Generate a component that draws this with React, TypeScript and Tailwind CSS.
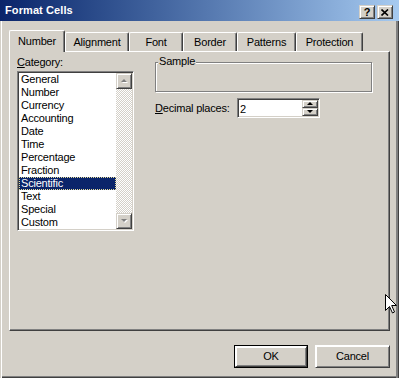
import type { ReactNode } from "react"

const categories = [
  "General",
  "Number",
  "Currency",
  "Accounting",
  "Date",
  "Time",
  "Percentage",
  "Fraction",
  "Scientific",
  "Text",
  "Special",
  "Custom",
]

const tabs = [
  { label: "Number", width: "w-[56px]" },
  { label: "Alignment", width: "w-[64px]" },
  { label: "Font", width: "w-[54px]" },
  { label: "Border", width: "w-[54px]" },
  { label: "Patterns", width: "w-[59px]" },
  { label: "Protection", width: "w-[67px]" },
]

function Raised({ className, children }: { className?: string; children?: ReactNode }) {
  return (
    <div
      className={`flex items-center justify-center border-r border-b border-[#404040] border-t border-l border-t-[#d4d0c8] border-l-[#d4d0c8] bg-[#d4d0c8] shadow-[inset_1px_1px_#fff,inset_-1px_-1px_#808080] ${className ?? ""}`}
    >
      {children}
    </div>
  )
}

function Arrow({ up, color = "#000", shadow = false }: { up: boolean; color?: string; shadow?: boolean }) {
  const d = up ? "M1 4 L4 1 L7 4 Z" : "M1 1 L4 4 L7 1 Z"
  return (
    <svg width="9" height="6" viewBox="0 0 9 6">
      {shadow ? <path d={d} fill="#fff" transform="translate(1 1)" /> : null}
      <path d={d} fill={color} />
    </svg>
  )
}

export default function App() {
  return (
    <div className="relative flex h-[378px] w-[399px] flex-col overflow-hidden bg-[#d4d0c8] font-['Liberation_Sans',Arial,sans-serif] text-[11px] tracking-[-0.2px] text-black select-none">
      {/* title bar */}
      <div className="flex h-[21px] shrink-0 items-start bg-linear-to-r from-[#0a246a] to-[#a6caf0] pl-[5px] pr-[6px]">
        <span className="mt-[4px] text-[11px] leading-[13px] font-bold tracking-[0.1px] text-white">Format Cells</span>
        <div className="ml-auto mt-[5px] flex gap-[2px]">
          <Raised className="h-[14px] w-[16px]">
            <span className="text-[11px] leading-none font-bold">?</span>
          </Raised>
          <Raised className="h-[14px] w-[16px]">
            <svg width="8" height="7" viewBox="0 0 8 7">
              <path d="M0.5 0.5 L7 6.5 M7 0.5 L0.5 6.5" stroke="#000" strokeWidth="1.6" />
            </svg>
          </Raised>
        </div>
      </div>

      {/* body */}
      <div className="flex flex-1 flex-col shadow-[inset_1px_0_#d4d0c8,inset_2px_0_#fff,inset_-1px_0_#404040,inset_-3px_0_#808080,inset_0_-1px_#404040,inset_0_-2px_#808080]">
        {/* tabs */}
        <div className="flex items-end pt-[9px] pl-[9px]">
          {tabs.map((t, i) =>
            i === 0 ? (
              <div
                key={t.label}
                className={`relative z-10 -mb-px flex h-[22px] ${t.width} items-start justify-center rounded-t-[2px] border-t border-l border-white bg-[#d4d0c8] pt-[4px] leading-[13px] shadow-[inset_-1px_0_#808080] border-r border-r-[#404040]`}
              >
                {t.label}
              </div>
            ) : (
              <div
                key={t.label}
                className={`flex h-[19px] ${t.width} items-start justify-center rounded-t-[2px] border-t border-l border-white border-r border-r-[#404040] pt-[3px] leading-[13px] shadow-[inset_-1px_0_#808080]`}
              >
                {t.label}
              </div>
            ),
          )}
        </div>

        {/* panel */}
        <div className="ml-[9px] flex h-[280px] w-[381px] border-t border-l border-white border-r border-b border-r-[#404040] border-b-[#404040] shadow-[inset_-1px_-1px_#808080] pt-[4px] pl-[7px]">
          {/* left column */}
          <div className="flex w-[117px] flex-col">
            <div className="h-[13px] leading-[13px]">
              <span className="underline">C</span>ategory:
            </div>
            <div className="mt-[2px] flex h-[160px] border-t border-l border-[#808080] border-r border-b border-r-white border-b-white bg-white shadow-[inset_1px_1px_#404040,inset_-1px_-1px_#d4d0c8] p-px">
              <div className="flex flex-1 flex-col overflow-hidden">
                {categories.map((c) =>
                  c === "Scientific" ? (
                    <div
                      key={c}
                      className="h-[13px] shrink-0 bg-[#0a246a] pl-[2px] leading-[13px] text-white outline-1 -outline-offset-1 outline-dotted outline-[#e6dd9a]"
                    >
                      {c}
                    </div>
                  ) : (
                    <div key={c} className="h-[13px] shrink-0 pl-[2px] leading-[13px]">
                      {c}
                    </div>
                  ),
                )}
              </div>
              <div className="flex w-[16px] flex-col bg-[repeating-conic-gradient(#fff_0%_25%,#d4d0c8_0%_50%)] bg-size-[2px_2px]">
                <Raised className="h-[16px] w-[16px]">
                  <Arrow up color="#808080" shadow />
                </Raised>
                <div className="flex-1" />
                <Raised className="h-[16px] w-[16px]">
                  <Arrow up={false} color="#808080" shadow />
                </Raised>
              </div>
            </div>
          </div>

          {/* right column */}
          <div className="ml-[21px] flex flex-col pt-[6px]">
            <div className="relative h-[30px] w-[217px] border border-[#808080] shadow-[inset_1px_1px_#fff,1px_1px_#fff]">
              <span className="absolute -top-[8px] left-[2px] bg-[#d4d0c8] px-px leading-[13px]">Sample</span>
            </div>
            <div className="mt-[6px] flex items-center">
              <div className="w-[82px] leading-[13px]">
                <span className="underline">D</span>ecimal places:
              </div>
              <div className="flex h-[20px] w-[83px] border-t border-l border-[#808080] border-r border-b border-r-white border-b-white bg-white shadow-[inset_1px_1px_#404040,inset_-1px_-1px_#d4d0c8] p-px">
                <div className="flex-1 pl-[1px] pt-[3px] leading-[13px]">2</div>
                <div className="flex w-[16px] flex-col">
                  <Raised className="h-[8px] w-[16px]">
                    <Arrow up />
                  </Raised>
                  <Raised className="h-[8px] w-[16px]">
                    <Arrow up={false} />
                  </Raised>
                </div>
              </div>
            </div>
          </div>
        </div>

        {/* buttons */}
        <div className="mt-[14px] flex justify-end gap-[7px] pr-[9px]">
          <div className="flex h-[23px] w-[74px] border border-black">
            <Raised className="flex-1 border-t-white border-l-white shadow-[inset_-1px_-1px_#808080]">OK</Raised>
          </div>
          <Raised className="h-[23px] w-[75px] border-t-white border-l-white shadow-[inset_-1px_-1px_#808080]">Cancel</Raised>
        </div>
      </div>

      {/* mouse pointer */}
      <svg className="absolute top-[294px] left-[385px]" width="13" height="20" viewBox="0 0 13 20">
        <path d="M0.5 0.5 L0.5 16.5 L4.5 12.5 L7.5 19 L9.5 18 L6.7 11.5 L11.5 11.5 Z" fill="#fff" stroke="#000" strokeWidth="1" />
      </svg>
    </div>
  )
}
